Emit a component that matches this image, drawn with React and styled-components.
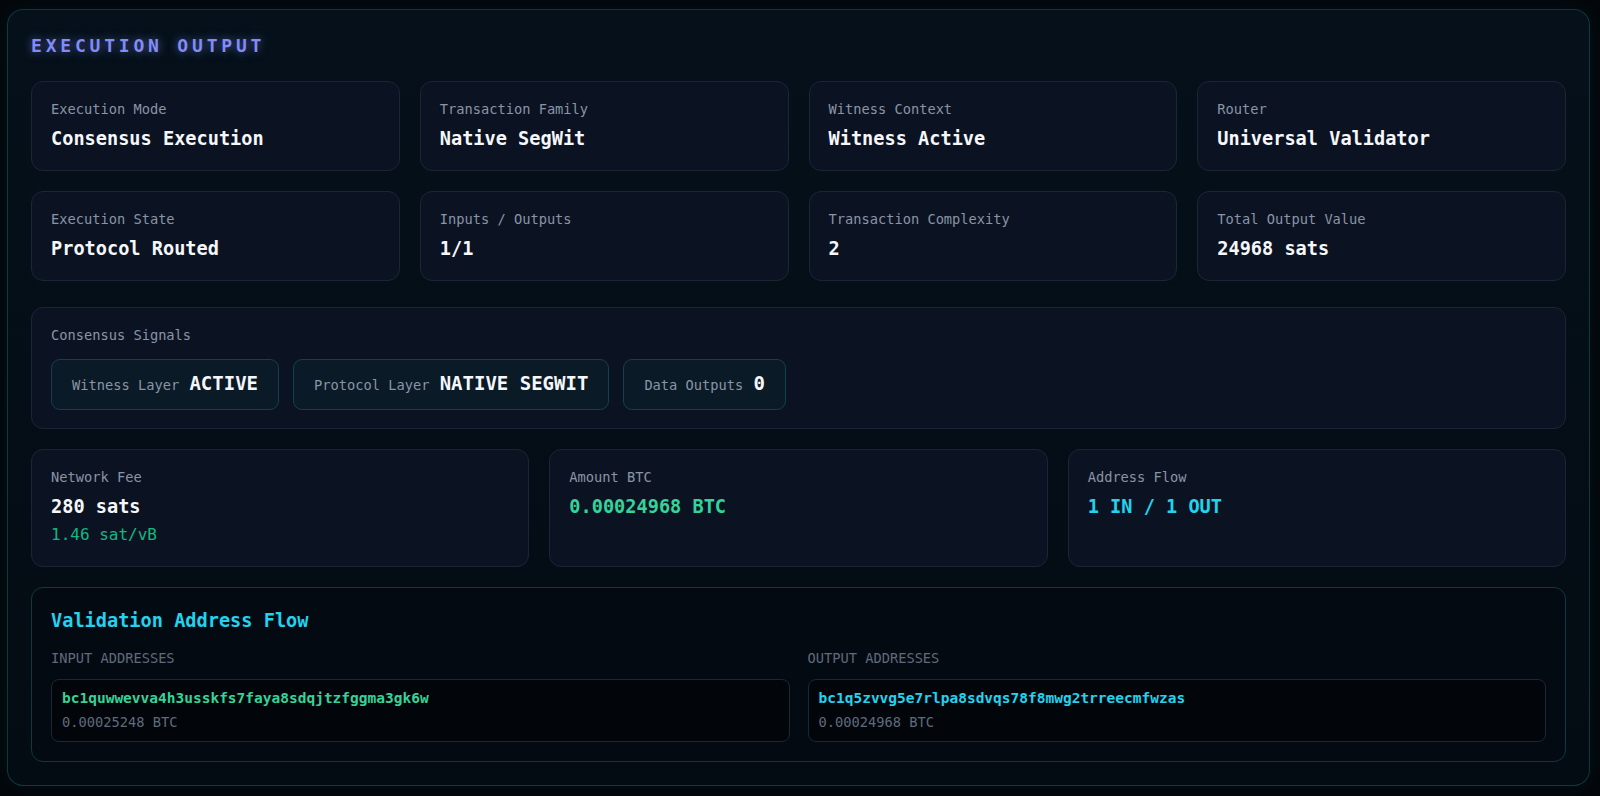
import React from 'react';
import styled, { createGlobalStyle } from 'styled-components';

const GlobalStyle = createGlobalStyle`
  html, body {
    margin: 0;
    padding: 0;
    background: #03070b;
  }
  body {
    font-family: "DejaVu Sans Mono", "Liberation Mono", monospace;
  }
`;

const Page = styled.div`
  padding: 9px 10px 13px 7px;
`;

const Panel = styled.section`
  background: linear-gradient(180deg, #05101a 0%, #040c13 100%);
  border: 1px solid rgba(45, 212, 191, 0.22);
  border-radius: 16px;
  padding: 23px;
  box-shadow: 0 0 18px rgba(34, 211, 238, 0.06);
`;

const Title = styled.h2`
  margin: 0 0 22px;
  font-size: 18px;
  line-height: 26px;
  font-weight: 700;
  letter-spacing: 3.8px;
  text-transform: uppercase;
  color: #818cf8;
  text-shadow: 0 0 10px rgba(129, 140, 248, 0.65);
`;

const Grid = styled.div`
  display: grid;
  grid-template-columns: repeat(${p => p.cols}, 1fr);
  grid-auto-rows: minmax(${p => p.rowMin || 0}px, auto);
  gap: 20px;
  margin-bottom: ${p => p.after}px;
`;

const Card = styled.div`
  background: #0b1322;
  border: 1px solid #1a2636;
  border-radius: 12px;
  padding: 18px 19px 18px;
  display: flex;
  flex-direction: column;
`;

const Label = styled.div`
  font-size: 13.7px;
  line-height: 18px;
  color: #8a94a6;
`;

const Value = styled.div`
  margin-top: 8px;
  font-size: 18.6px;
  line-height: 26px;
  font-weight: 700;
  color: ${p => p.tone || '#f5f7fa'};
`;

const Sub = styled.div`
  margin-top: 5px;
  font-size: 16px;
  line-height: 20px;
  color: #10b981;
`;

const SignalCard = styled(Card)`
  margin-bottom: 20px;
`;

const Chips = styled.div`
  display: flex;
  gap: 14px;
  margin-top: 15px;
`;

const Chip = styled.div`
  background: #0a1a27;
  border: 1px solid #13404f;
  border-radius: 9px;
  padding: 11px 20px;
  line-height: 25px;
  font-size: 13.7px;
  color: #8a94a6;
  white-space: nowrap;

  strong {
    font-size: 19px;
    font-weight: 700;
    color: #f5f7fa;
    margin-left: 2px;
  }
`;

const FlowCard = styled.div`
  background: #040a12;
  border: 1px solid #0f3744;
  border-radius: 12px;
  padding: 20px 19px 19px;
`;

const FlowTitle = styled.h3`
  margin: 0 0 15px;
  font-size: 18.6px;
  line-height: 26px;
  font-weight: 700;
  color: #22d3ee;
`;

const Columns = styled.div`
  display: grid;
  grid-template-columns: 1fr 1fr;
  gap: 18px;
`;

const ColHead = styled.div`
  font-size: 13.7px;
  line-height: 18px;
  color: #5f6b7d;
  text-transform: uppercase;
  margin-bottom: 12px;
`;

const AddrBox = styled.div`
  background: #02060b;
  border: 1px solid #1c2736;
  border-radius: 8px;
  padding: 9px 10px 10px;
`;

const Addr = styled.div`
  font-size: 14.5px;
  line-height: 18px;
  font-weight: 700;
  color: ${p => p.tone};
`;

const AddrAmt = styled.div`
  margin-top: 6px;
  font-size: 13.7px;
  line-height: 18px;
  color: #5f6b7d;
`;

const topCards = [
  ['Execution Mode', 'Consensus Execution'],
  ['Transaction Family', 'Native SegWit'],
  ['Witness Context', 'Witness Active'],
  ['Router', 'Universal Validator'],
  ['Execution State', 'Protocol Routed'],
  ['Inputs / Outputs', '1/1'],
  ['Transaction Complexity', '2'],
  ['Total Output Value', '24968 sats'],
];

const signals = [
  ['Witness Layer', 'ACTIVE'],
  ['Protocol Layer', 'NATIVE SEGWIT'],
  ['Data Outputs', '0'],
];

export default function App() {
  return (
    <Page>
      <GlobalStyle />
      <Panel>
        <Title>Execution Output</Title>

        <Grid cols={4} after={26}>
          {topCards.map(([label, value]) => (
            <Card key={label}>
              <Label>{label}</Label>
              <Value>{value}</Value>
            </Card>
          ))}
        </Grid>

        <SignalCard>
          <Label>Consensus Signals</Label>
          <Chips>
            {signals.map(([label, value]) => (
              <Chip key={label}>
                {label} <strong>{value}</strong>
              </Chip>
            ))}
          </Chips>
        </SignalCard>

        <Grid cols={3} after={20} rowMin={118}>
          <Card>
            <Label>Network Fee</Label>
            <Value>280 sats</Value>
            <Sub>1.46 sat/vB</Sub>
          </Card>
          <Card>
            <Label>Amount BTC</Label>
            <Value tone="#34d399">0.00024968 BTC</Value>
          </Card>
          <Card>
            <Label>Address Flow</Label>
            <Value tone="#22d3ee">1 IN / 1 OUT</Value>
          </Card>
        </Grid>

        <FlowCard>
          <FlowTitle>Validation Address Flow</FlowTitle>
          <Columns>
            <div>
              <ColHead>Input Addresses</ColHead>
              <AddrBox>
                <Addr tone="#34d399">bc1quwwevva4h3usskfs7faya8sdqjtzfggma3gk6w</Addr>
                <AddrAmt>0.00025248 BTC</AddrAmt>
              </AddrBox>
            </div>
            <div>
              <ColHead>Output Addresses</ColHead>
              <AddrBox>
                <Addr tone="#22d3ee">bc1q5zvvg5e7rlpa8sdvqs78f8mwg2trreecmfwzas</Addr>
                <AddrAmt>0.00024968 BTC</AddrAmt>
              </AddrBox>
            </div>
          </Columns>
        </FlowCard>
      </Panel>
    </Page>
  );
}
